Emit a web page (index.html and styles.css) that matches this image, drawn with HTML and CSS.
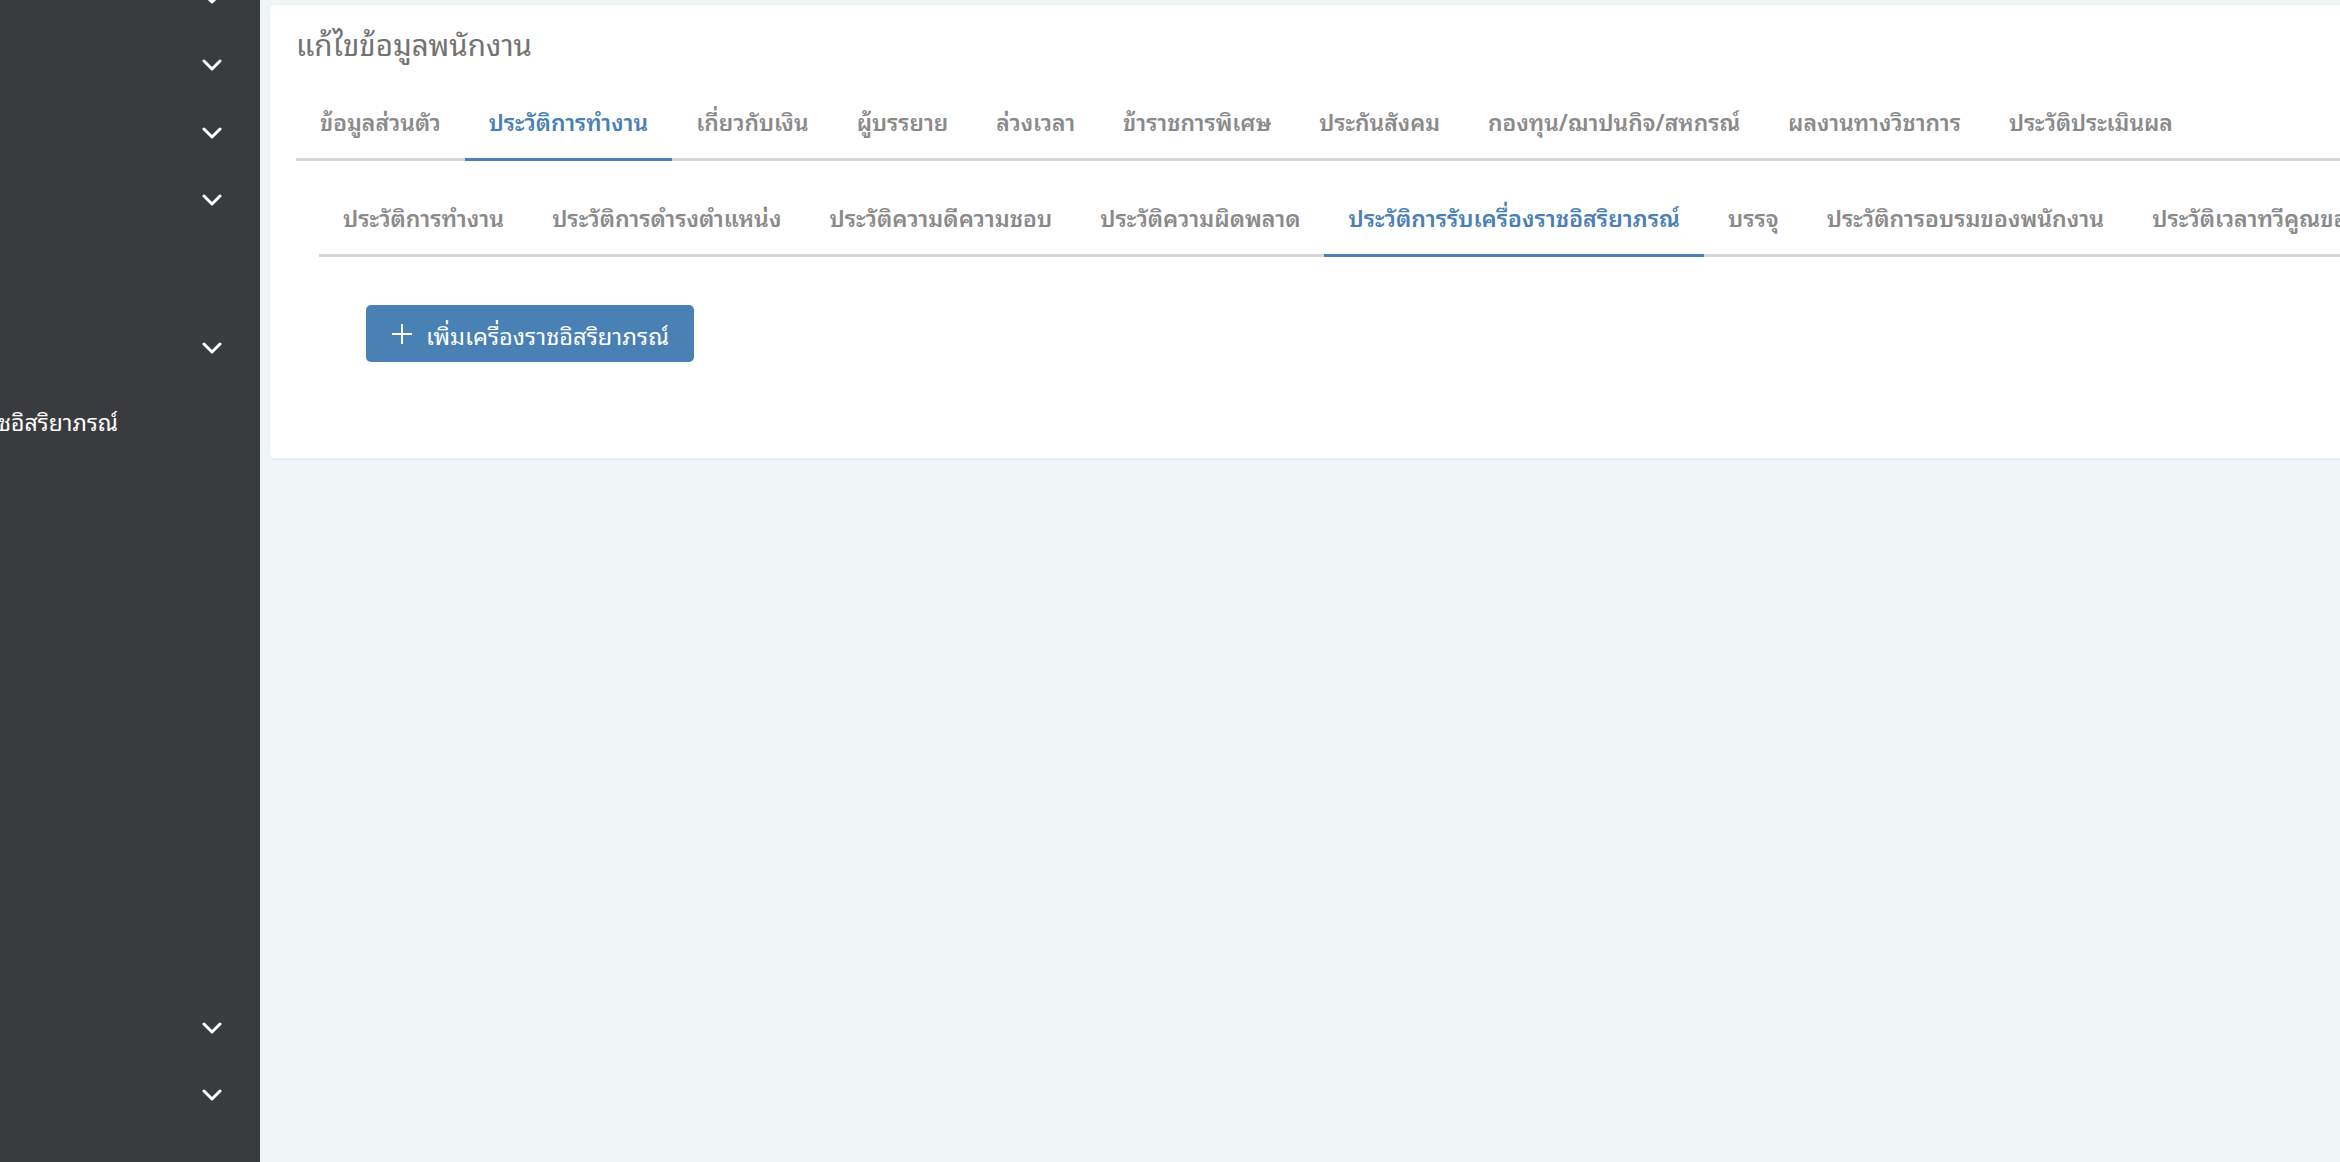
FILE: index.html
```html
<!DOCTYPE html>
<html lang="th">
<head>
<meta charset="utf-8">
<title>แก้ไขข้อมูลพนักงาน</title>
<link rel="stylesheet" href="styles.css">
</head>
<body>
<aside class="sidebar">
  <ul class="menu">
    <li class="menu-item"><svg class="chev" viewBox="0 0 20 12"><polyline points="2,2 10,10 18,2"/></svg></li>
    <li class="menu-item"><svg class="chev" viewBox="0 0 20 12"><polyline points="2,2 10,10 18,2"/></svg></li>
    <li class="menu-item"><svg class="chev" viewBox="0 0 20 12"><polyline points="2,2 10,10 18,2"/></svg></li>
    <li class="menu-item"><svg class="chev" viewBox="0 0 20 12"><polyline points="2,2 10,10 18,2"/></svg></li>
    <li class="menu-gap"></li>
    <li class="menu-item"><svg class="chev" viewBox="0 0 20 12"><polyline points="2,2 10,10 18,2"/></svg></li>
    <li class="menu-sub"><span class="sub-clip"><span class="sub-label">ประวัติการรับเครื่องราชอิสริยาภรณ์</span></span></li>
    <li class="menu-fill"></li>
    <li class="menu-item"><svg class="chev" viewBox="0 0 20 12"><polyline points="2,2 10,10 18,2"/></svg></li>
    <li class="menu-item"><svg class="chev" viewBox="0 0 20 12"><polyline points="2,2 10,10 18,2"/></svg></li>
  </ul>
</aside>
<main class="content">
  <section class="card">
    <h1 class="card-title">แก้ไขข้อมูลพนักงาน</h1>
    <nav class="tabs tabs-main">
      <a class="tab">ข้อมูลส่วนตัว</a>
      <a class="tab active">ประวัติการทำงาน</a>
      <a class="tab">เกี่ยวกับเงิน</a>
      <a class="tab">ผู้บรรยาย</a>
      <a class="tab">ล่วงเวลา</a>
      <a class="tab">ข้าราชการพิเศษ</a>
      <a class="tab">ประกันสังคม</a>
      <a class="tab">กองทุน/ฌาปนกิจ/สหกรณ์</a>
      <a class="tab">ผลงานทางวิชาการ</a>
      <a class="tab">ประวัติประเมินผล</a>
    </nav>
    <div class="pane">
      <nav class="tabs tabs-sub">
        <a class="tab">ประวัติการทำงาน</a>
        <a class="tab">ประวัติการดำรงตำแหน่ง</a>
        <a class="tab">ประวัติความดีความชอบ</a>
        <a class="tab">ประวัติความผิดพลาด</a>
        <a class="tab active">ประวัติการรับเครื่องราชอิสริยาภรณ์</a>
        <a class="tab">บรรจุ</a>
        <a class="tab">ประวัติการอบรมของพนักงาน</a>
        <a class="tab">ประวัติเวลาทวีคูณของพนักงาน</a>
      </nav>
      <div class="subpane">
        <button class="btn-primary" type="button">
          <svg class="plus" viewBox="0 0 22 22"><path d="M11 1v20M1 11h20"/></svg>
          <span>เพิ่มเครื่องราชอิสริยาภรณ์</span>
        </button>
      </div>
    </div>
  </section>
</main>
</body>
</html>
```
FILE: styles.css
```css
* { box-sizing: border-box; }
html, body { margin: 0; padding: 0; height: 100%; }
body {
  display: flex;
  width: 2340px;
  height: 1162px;
  overflow: hidden;
  font-family: "Noto Sans Thai Looped", "Noto Sans Thai", "Noto Sans", sans-serif;
  background: #f0f5f8;
}
.sidebar {
  width: 260px;
  flex: 0 0 260px;
  background: #3a3b3f;
  overflow: hidden;
}
.menu {
  list-style: none;
  margin: -36px 0 0;
  padding: 0 0 33px;
  height: calc(100% + 36px);
  display: flex;
  flex-direction: column;
}
.menu-item {
  height: 67.5px;
  flex: 0 0 67.5px;
  display: flex;
  align-items: center;
  justify-content: flex-end;
  padding-right: 38px;
}
.chev { width: 20px; height: 12px; fill: none; stroke: #fff; stroke-width: 3; stroke-linecap: round; stroke-linejoin: round; }
.menu-gap { flex: 0 0 80px; }
.menu-sub { flex: 0 0 77px; display: flex; align-items: center; }
.sub-clip { width: 118px; display: flex; justify-content: flex-end; overflow: hidden; }
.sub-label { white-space: nowrap; color: #fff; font-size: 23px; }
.menu-fill { flex: 1 1 auto; }

.content {
  flex: 1 1 auto;
  min-width: 0;
  overflow: hidden;
  padding: 5px 0 0 10px;
  background: #f0f5f8;
}
.card {
  width: max-content;
  min-width: 2200px;
  background: #fff;
  border-radius: 4px;
  box-shadow: 0 1px 4px rgba(0, 0, 0, 0.06);
  padding: 18px 0 26px 26px;
}
.card-title {
  margin: 0;
  font-size: 29.5px;
  line-height: 40px;
  font-weight: 400;
  color: #727272;
}
.tabs {
  display: flex;
  white-space: nowrap;
  border-bottom: 3px solid #d6d6d6;
}
.tabs-main { margin-top: 23px; }
.tab {
  display: block;
  padding: 20px 24px 22px;
  line-height: 30px;
  font-size: 22.85px;
  font-weight: 600;
  color: #8a8a8a;
  border-bottom: 3px solid #d6d6d6;
  margin-bottom: -3px;
}
.tabs-sub .tab { font-size: 23.1px; }
.tab.active { color: #4a80b5; border-bottom-color: #4a80b5; }
.pane { padding: 21px 0 0 23px; }
.subpane { padding: 48px 0 70px 47px; }
.btn-primary {
  display: inline-flex;
  align-items: center;
  gap: 13px;
  height: 57px;
  padding: 0 25px 0 25px;
  border: 0;
  border-radius: 5px;
  background: #4a81b4;
  color: #fff;
  font-family: inherit;
  font-size: 23.6px;
}
.plus { width: 22px; height: 22px; stroke: #fff; stroke-width: 2; fill: none; }
```
